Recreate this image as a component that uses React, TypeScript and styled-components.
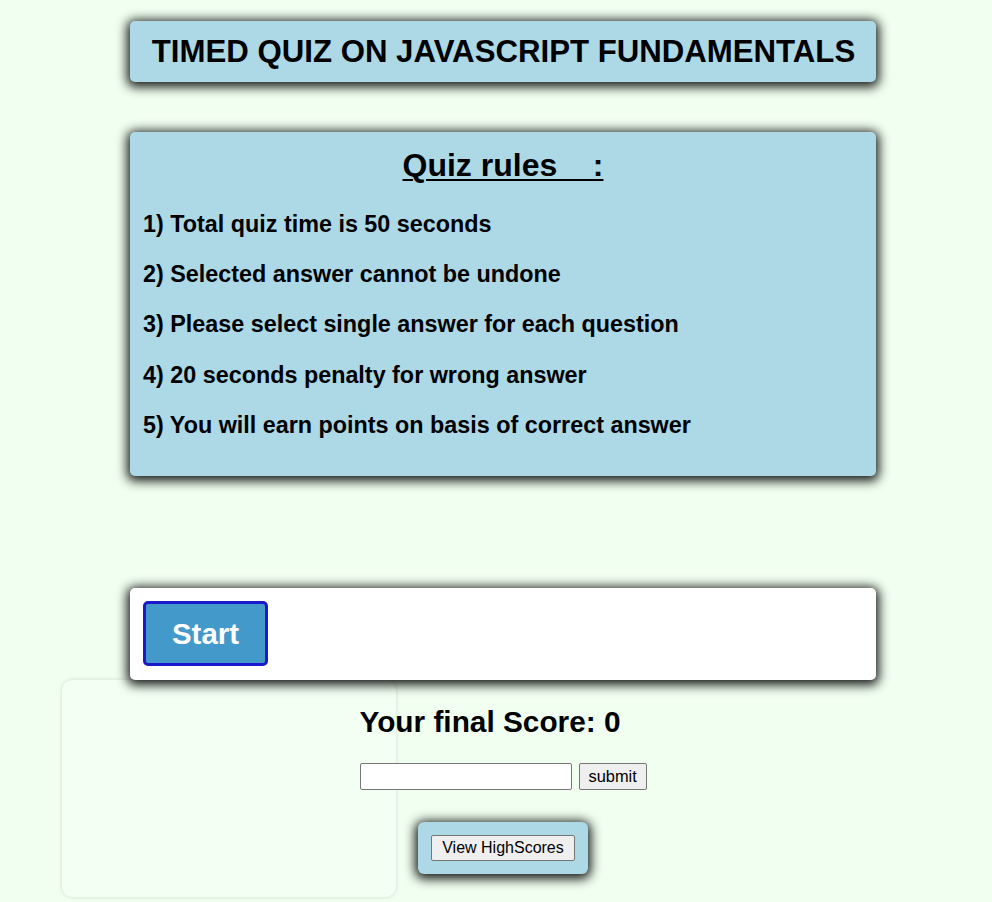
import React from "react";
import styled, { createGlobalStyle } from "styled-components";

const GlobalStyle = createGlobalStyle`
  html, body {
    margin: 0;
    padding: 0;
    background: #f0fff0;
  }
  body {
    font-family: "Liberation Sans", Arial, sans-serif;
    color: #000;
  }
`;

const Page = styled.div`
  position: relative;
  min-height: 902px;
  padding-top: 21px;
  box-sizing: border-box;
`;

const Column = styled.main`
  position: relative;
  z-index: 1;
  width: 746px;
  margin-left: 130px;
  display: flex;
  flex-direction: column;
`;

const Card = styled.section<{ $bg?: string }>`
  background: ${(p) => p.$bg || "#add8e6"};
  border-radius: 5px;
  box-shadow: 0 2px 11px 3px rgba(0, 0, 0, 0.9);
  box-sizing: border-box;
`;

const HeaderCard = styled(Card)`
  height: 61px;
  display: flex;
  align-items: center;
  justify-content: center;
`;

const HeaderTitle = styled.h1`
  margin: 0;
  font-size: 31.2px;
  font-weight: 700;
  line-height: 1;
  padding-left: 1px;
`;

const RulesCard = styled(Card)`
  margin-top: 50px;
  padding: 16px 13px 37px 13px;
  height: 344px;
`;

const RulesTitle = styled.h2`
  margin: 0;
  text-align: center;
  font-size: 32px;
  font-weight: 700;
  line-height: 35.6px;
  text-decoration: underline;
  text-decoration-thickness: 2px;
  text-underline-offset: 3px;
  white-space: pre;
`;

const RulesList = styled.ol`
  list-style: none;
  margin: 27px 0 0 0;
  padding: 0;
  display: flex;
  flex-direction: column;
  gap: 24.4px;
`;

const Rule = styled.li`
  font-size: 23.35px;
  font-weight: 700;
  line-height: 26px;
`;

const StartCard = styled(Card)`
  margin-top: 112px;
  padding: 13px 13px 14px 13px;
  display: flex;
`;

const StartButton = styled.button`
  width: 125px;
  height: 65px;
  box-sizing: border-box;
  background: #4499cb;
  border: 3px solid #1a1acc;
  border-radius: 5px;
  color: #fff;
  font-family: "Liberation Sans", Arial, sans-serif;
  font-size: 29.4px;
  font-weight: 700;
  cursor: pointer;
  padding: 0;
`;

const ScoreBlock = styled.div`
  width: 289px;
  margin: 25px auto 0 auto;
  padding-left: 2px;
`;

const ScoreTitle = styled.h2`
  margin: 0;
  font-size: 29.8px;
  font-weight: 700;
  line-height: 34px;
`;

const ScoreForm = styled.form`
  margin-top: 24px;
  display: flex;
  gap: 7px;
`;

const NameInput = styled.input`
  width: 212px;
  height: 27px;
  box-sizing: border-box;
  border: 1px solid #767676;
  border-radius: 2px;
  background: #fff;
  padding: 1px 2px;
  font-size: 16px;
`;

const NativeButton = styled.button`
  height: 27px;
  box-sizing: border-box;
  background: #efefef;
  border: 1px solid #767676;
  border-radius: 2px;
  font-family: "Liberation Sans", Arial, sans-serif;
  font-size: 16.4px;
  color: #000;
  padding: 0 9px;
  cursor: pointer;
`;

const ScoresCard = styled(Card)`
  align-self: center;
  margin-top: 32px;
  padding: 13px;
  border-radius: 6px;
  display: flex;
`;

const ScoresButton = styled(NativeButton)`
  height: 26px;
  font-size: 16px;
  padding: 0 10px;
`;

const GhostPanel = styled.div`
  position: absolute;
  left: 62px;
  top: 680px;
  width: 334px;
  height: 217px;
  border-radius: 10px;
  background: #f2fff2;
  box-shadow: 0 0 4px rgba(0, 0, 0, 0.14);
  z-index: 0;
  pointer-events: none;
`;

const rules = [
  "1) Total quiz time is 50 seconds",
  "2) Selected answer cannot be undone",
  "3) Please select single answer for each question",
  "4) 20 seconds penalty for wrong answer",
  "5) You will earn points on basis of correct answer",
];

export default function App() {
  return (
    <>
      <GlobalStyle />
      <Page>
        <GhostPanel />
        <Column>
          <HeaderCard>
            <HeaderTitle>TIMED QUIZ ON JAVASCRIPT FUNDAMENTALS</HeaderTitle>
          </HeaderCard>
          <RulesCard>
            <RulesTitle>{"Quiz rules    :"}</RulesTitle>
            <RulesList>
              {rules.map((r) => (
                <Rule key={r}>{r}</Rule>
              ))}
            </RulesList>
          </RulesCard>
          <StartCard $bg="#ffffff">
            <StartButton type="button">Start</StartButton>
          </StartCard>
          <ScoreBlock>
            <ScoreTitle>Your final Score: 0</ScoreTitle>
            <ScoreForm onSubmit={(e) => e.preventDefault()}>
              <NameInput type="text" />
              <NativeButton type="submit">submit</NativeButton>
            </ScoreForm>
          </ScoreBlock>
          <ScoresCard>
            <ScoresButton type="button">View HighScores</ScoresButton>
          </ScoresCard>
        </Column>
      </Page>
    </>
  );
}
